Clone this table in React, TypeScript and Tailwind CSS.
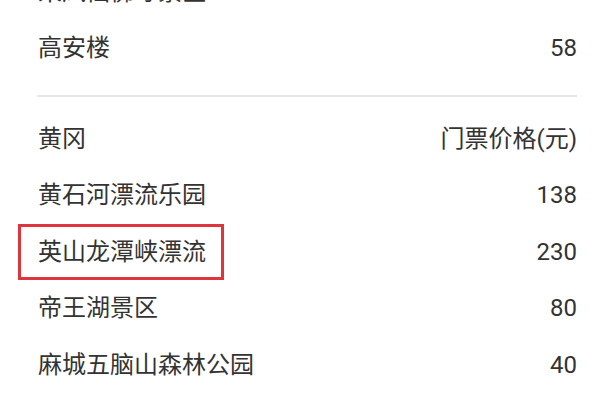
import React from "react";

const rows: { name: string; price: string; mark?: boolean }[] = [
  { name: "黄石河漂流乐园", price: "138" },
  { name: "英山龙潭峡漂流", price: "230", mark: true },
  { name: "帝王湖景区", price: "80" },
  { name: "麻城五脑山森林公园", price: "40" },
];

function Row({ name, price, mark }: { name: string; price: string; mark?: boolean }) {
  return (
    <div className="flex h-[56.5px] items-center justify-between">
      <div className="relative flex h-full items-center">
        {mark && (
          <div className="absolute -left-[20px] -right-[18px] top-0 bottom-0 border-[3px] border-[#e0343c]" />
        )}
        <span>{name}</span>
      </div>
      <span>{price}</span>
    </div>
  );
}

export default function App() {
  return (
    <div
      className="h-[400px] w-[600px] overflow-hidden bg-white pl-[38px] pr-[23px] text-[24px] leading-none text-[#333333]"
      style={{ fontFamily: "Roboto, 'Noto Sans CJK SC', sans-serif" }}
    >
      <div className="-mt-[36px]">
        <div className="flex h-[56px] items-center justify-between">
          <span>来凤仙佛寺景区</span>
        </div>
        <div className="flex h-[56px] items-center justify-between">
          <span>高安楼</span>
          <span>58</span>
        </div>
        <div className="mt-[19px] -ml-px h-[2px] bg-[#e6e6e6]" />
        <div className="mt-[14px] flex h-[56px] items-center justify-between">
          <span>黄冈</span>
          <span>门票价格(元)</span>
        </div>
        {rows.map((r) => (
          <Row key={r.name} {...r} />
        ))}
      </div>
    </div>
  );
}
